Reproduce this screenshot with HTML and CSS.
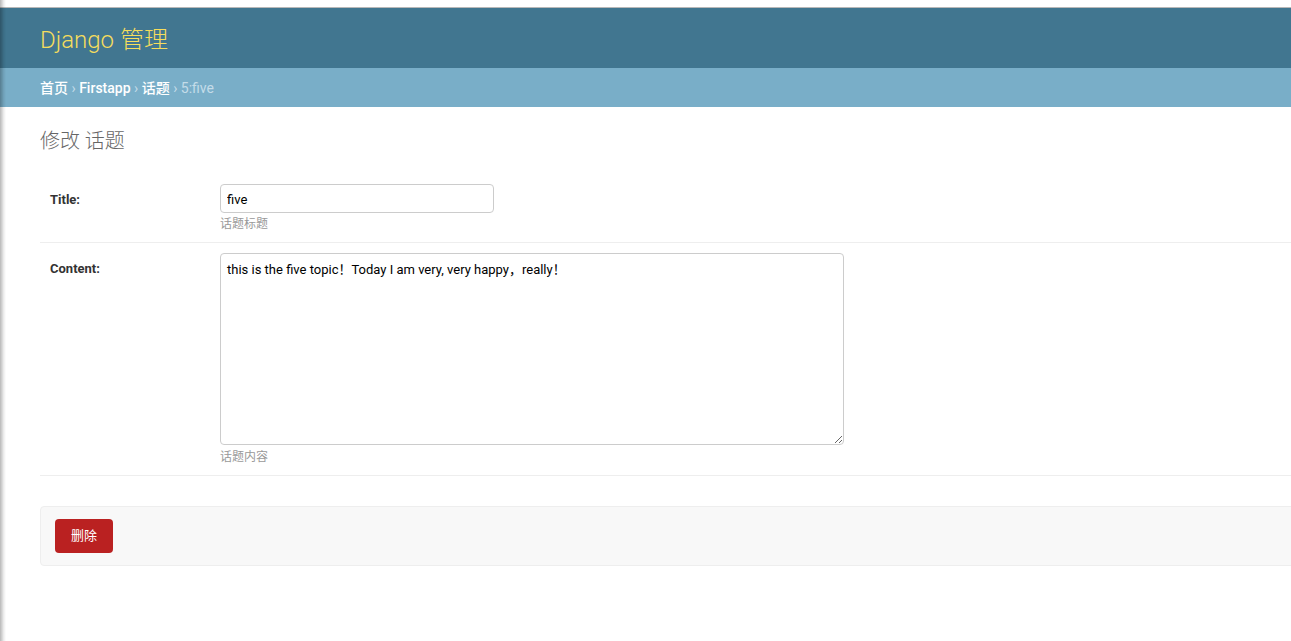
FILE: index.html
```html
<!DOCTYPE html>
<html lang="zh-CN">
<head>
    <meta charset="UTF-8">
    <title>修改 话题 | Django 站点管理员</title>
    <link rel="stylesheet" href="styles.css">
</head>
<body>
    <!-- 窗口边缘 -->
    <div class="window-top"></div>
    <div class="window-shadow"></div>

    <!-- 页头 -->
    <div class="header">
        <h1 class="branding">Django 管理</h1>
    </div>

    <!-- 面包屑 -->
    <div class="breadcrumbs">
        <a href="#">首页</a> › <a href="#">Firstapp</a> › <a href="#">话题</a> › 5:five
    </div>

    <!-- 内容 -->
    <div class="content">
        <h1 class="page-title">修改 话题</h1>

        <form class="change-form">
            <fieldset class="module">
                <div class="form-row">
                    <label class="required" for="id_title">Title:</label>
                    <div class="field">
                        <input type="text" id="id_title" class="text-input" value="five">
                        <div class="help">话题标题</div>
                    </div>
                </div>
                <div class="form-row">
                    <label class="required" for="id_content">Content:</label>
                    <div class="field">
                        <textarea id="id_content" class="large-text">this is the five topic！Today I am very, very happy，really！</textarea>
                        <div class="help">话题内容</div>
                    </div>
                </div>
            </fieldset>

            <div class="submit-row">
                <a href="#" class="deletelink">删除</a>
            </div>
        </form>
    </div>
</body>
</html>
```

FILE: styles.css
```css
/* 重置 */
* {
    margin: 0;
    padding: 0;
    box-sizing: border-box;
}

html, body {
    overflow: hidden;
}

body {
    background: #fff;
    color: #333;
    font-family: Roboto, "Noto Sans CJK SC", "Liberation Sans", sans-serif;
    font-size: 14px;
}

a {
    text-decoration: none;
}

/* 窗口边缘 */
.window-top {
    height: 8px;
    border-bottom: 1px solid #b8b8b8;
    background: #fff;
}

.window-shadow {
    position: fixed;
    top: 0;
    left: 0;
    width: 6px;
    height: 100%;
    background: linear-gradient(to right, rgba(0,0,0,0.28), rgba(0,0,0,0.08) 60%, rgba(0,0,0,0));
    z-index: 10;
}

/* 页头 */
.header {
    height: 60px;
    padding: 0 40px;
    background: #417690;
    display: flex;
    align-items: center;
}

.branding {
    font-size: 24px;
    font-weight: 300;
    color: #f5dd5d;
    line-height: 1;
    padding-top: 4px;
}

/* 面包屑 */
.breadcrumbs {
    height: 39px;
    padding: 11px 40px 9px;
    background: #79aec8;
    color: #c4dce8;
    font-size: 14px;
    line-height: 19px;
}

.breadcrumbs a {
    color: #fff;
    font-weight: 500;
}

/* 内容 */
.content {
    padding: 20px 0 20px 40px;
    margin-right: -20px;
}

.page-title {
    font-size: 20px;
    font-weight: 300;
    color: #666;
    line-height: 28px;
    margin-bottom: 19px;
}

.module {
    border: none;
}

.form-row {
    display: flex;
    padding: 10px;
    border-bottom: 1px solid #eee;
    font-size: 13px;
}

.form-row label {
    width: 170px;
    flex-shrink: 0;
    padding: 8px 10px 0 0;
    font-weight: bold;
    color: #333;
    line-height: 16px;
}

.text-input,
.large-text {
    font-family: Roboto, "Noto Sans CJK SC", "Liberation Sans", sans-serif;
    font-size: 13px;
    color: #000;
    border: 1px solid #ccc;
    border-radius: 4px;
    padding: 5px 6px;
    background: #fff;
}

.text-input {
    width: 274px;
    height: 29px;
    padding-top: 6px;
}

.large-text {
    display: block;
    width: 624px;
    height: 192px;
    margin-bottom: 1px;
    padding-top: 6px;
    line-height: 19px;
    resize: both;
}

.help {
    color: #999;
    font-size: 12px;
    line-height: 16px;
    padding-top: 3px;
}

/* 提交栏 */
.submit-row {
    margin-top: 30px;
    padding: 12px 14px;
    background: #f8f8f8;
    border: 1px solid #eee;
    border-radius: 4px;
}

.deletelink {
    display: inline-block;
    padding: 10px 16px;
    background: #ba2121;
    color: #fff;
    border-radius: 4px;
    font-size: 13px;
    line-height: 14px;
}
```
